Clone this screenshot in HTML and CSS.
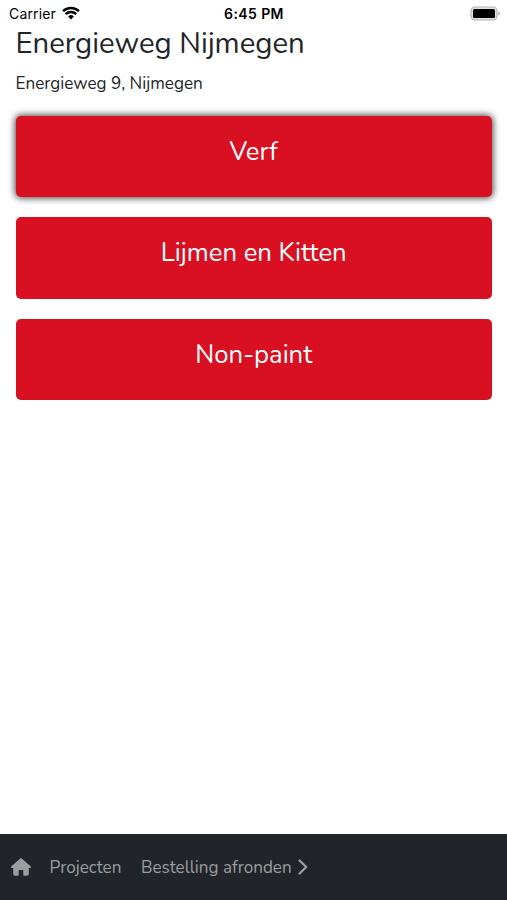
FILE: index.html
```
<!DOCTYPE html>
<html lang="nl">
<head>
    <meta charset="UTF-8">
    <meta name="viewport" content="width=device-width, initial-scale=1.0">
    <title>Energieweg Nijmegen</title>
    <link rel="stylesheet" href="styles.css">
</head>
<body>
    <div class="status-bar">
        <div class="status-left">
            <span class="carrier">Carrier</span>
            <svg class="wifi" viewBox="0 0 18 14" width="18" height="14">
                <path d="M1 5.2a11.4 11.4 0 0 1 16 0M3.8 8.2a7.4 7.4 0 0 1 10.4 0" fill="none" stroke="#000" stroke-width="2.5"/>
                <path d="M6.1 10.5a4.1 4.1 0 0 1 5.8 0L9 13.5z" fill="#000"/>
            </svg>
        </div>
        <span class="time">6:45 PM</span>
        <div class="status-right">
            <svg class="battery" viewBox="0 0 31 15" width="31" height="15">
                <rect x="1" y="1" width="26" height="13" rx="4" fill="#e2e2e2" stroke="#b5b5b5" stroke-width="1.2"/>
                <rect x="3" y="3" width="22" height="9" rx="1.5" fill="#000"/>
                <path d="M28.4 5.4c2.2.8 2.2 3.4 0 4.2z" fill="#aaa"/>
            </svg>
        </div>
    </div>

    <main class="content">
        <h1 class="project-title">Energieweg Nijmegen</h1>
        <p class="project-address">Energieweg 9, Nijmegen</p>

        <div class="categories">
            <button class="category active">Verf</button>
            <button class="category">Lijmen en Kitten</button>
            <button class="category">Non-paint</button>
        </div>
    </main>

    <nav class="navbar">
        <a class="nav-home" href="#" aria-label="Home">
            <svg viewBox="0 0 20 18" width="20" height="18">
                <path fill="currentColor" d="M9.3.4a1.100 1.100 0 0 1 1.400 0l8.900 7.800c.8.700.3 1.900-.7 1.900h-1.100v5.700c0 1.200-.8 1.900-1.900 1.900h-2.600c-.6 0-1-.4-1-1v-3.600c0-.6-.4-1-1-1H8.700c-.6 0-1 .4-1 1v3.600c0 .6-.4 1-1 1H4.100c-1.100 0-1.900-.7-1.900-1.900v-5.700H1.100c-1 0-1.500-1.200-.7-1.900z"/>
            </svg>
        </a>
        <a class="nav-link nav-projects" href="#">Projecten</a>
        <a class="nav-link nav-order" href="#">
            <span>Bestelling afronden</span>
            <svg viewBox="0 0 10 16" width="10" height="16">
                <path d="M1.6 1.5 8.2 8l-6.600 6.500" fill="none" stroke="currentColor" stroke-width="2.3" stroke-linecap="round" stroke-linejoin="round"/>
            </svg>
        </a>
    </nav>
</body>
</html>
```
FILE: styles.css
```
* {
    margin: 0;
    padding: 0;
    box-sizing: border-box;
}

body {
    font-family: 'Nunito', 'Lato', sans-serif;
    background: #fff;
    color: #212529;
    height: 100vh;
    display: flex;
    flex-direction: column;
    overflow: hidden;
}

.status-bar {
    display: grid;
    grid-template-columns: 1fr auto 1fr;
    align-items: center;
    height: 27px;
    padding: 0 6px 0 9px;
    font-family: 'Inter', sans-serif;
    font-size: 14px;
    color: #000;
}

.status-left {
    display: flex;
    align-items: center;
    gap: 6px;
}

.status-left svg,
.status-right svg {
    display: block;
}

.carrier {
    letter-spacing: 0.15px;
}

.wifi {
    margin-top: -2px;
}

.time {
    margin-right: 2px;
    font-weight: 600;
    letter-spacing: 0.4px;
}

.status-right {
    display: flex;
    justify-content: flex-end;
}

.content {
    flex: 1;
    padding: 0 15px 0 15.5px;
}

.project-title {
    margin-top: -1px;
    font-size: 29.3px;
    font-weight: 400;
    line-height: 34px;
    white-space: nowrap;
}

.project-address {
    margin-top: 13px;
    font-size: 17.1px;
    line-height: 22px;
}

.categories {
    display: flex;
    flex-direction: column;
    gap: 20px;
    margin-top: 20.5px;
}

.category {
    height: 81.5px;
    padding-bottom: 9px;
    border: none;
    border-radius: 5px;
    background: #d91022;
    color: #fff;
    font-family: inherit;
    font-size: 25.7px;
    line-height: 32px;
}

.category.active {
    box-shadow: 0 0 7px 1px rgba(0, 0, 0, 0.75);
}

.navbar {
    display: flex;
    align-items: center;
    height: 66px;
    padding: 0 10.5px;
    background: #212529;
    color: #9b9d9f;
}

.navbar a {
    color: inherit;
    text-decoration: none;
}

.navbar svg {
    display: block;
}

.nav-link {
    padding-top: 2px;
    font-size: 17.1px;
    line-height: 24px;
    white-space: nowrap;
}

.nav-projects {
    margin-left: 19px;
}

.nav-order {
    display: flex;
    align-items: center;
    gap: 6px;
    margin-left: 19.5px;
}

.nav-order svg {
    margin-top: -2px;
}
```
